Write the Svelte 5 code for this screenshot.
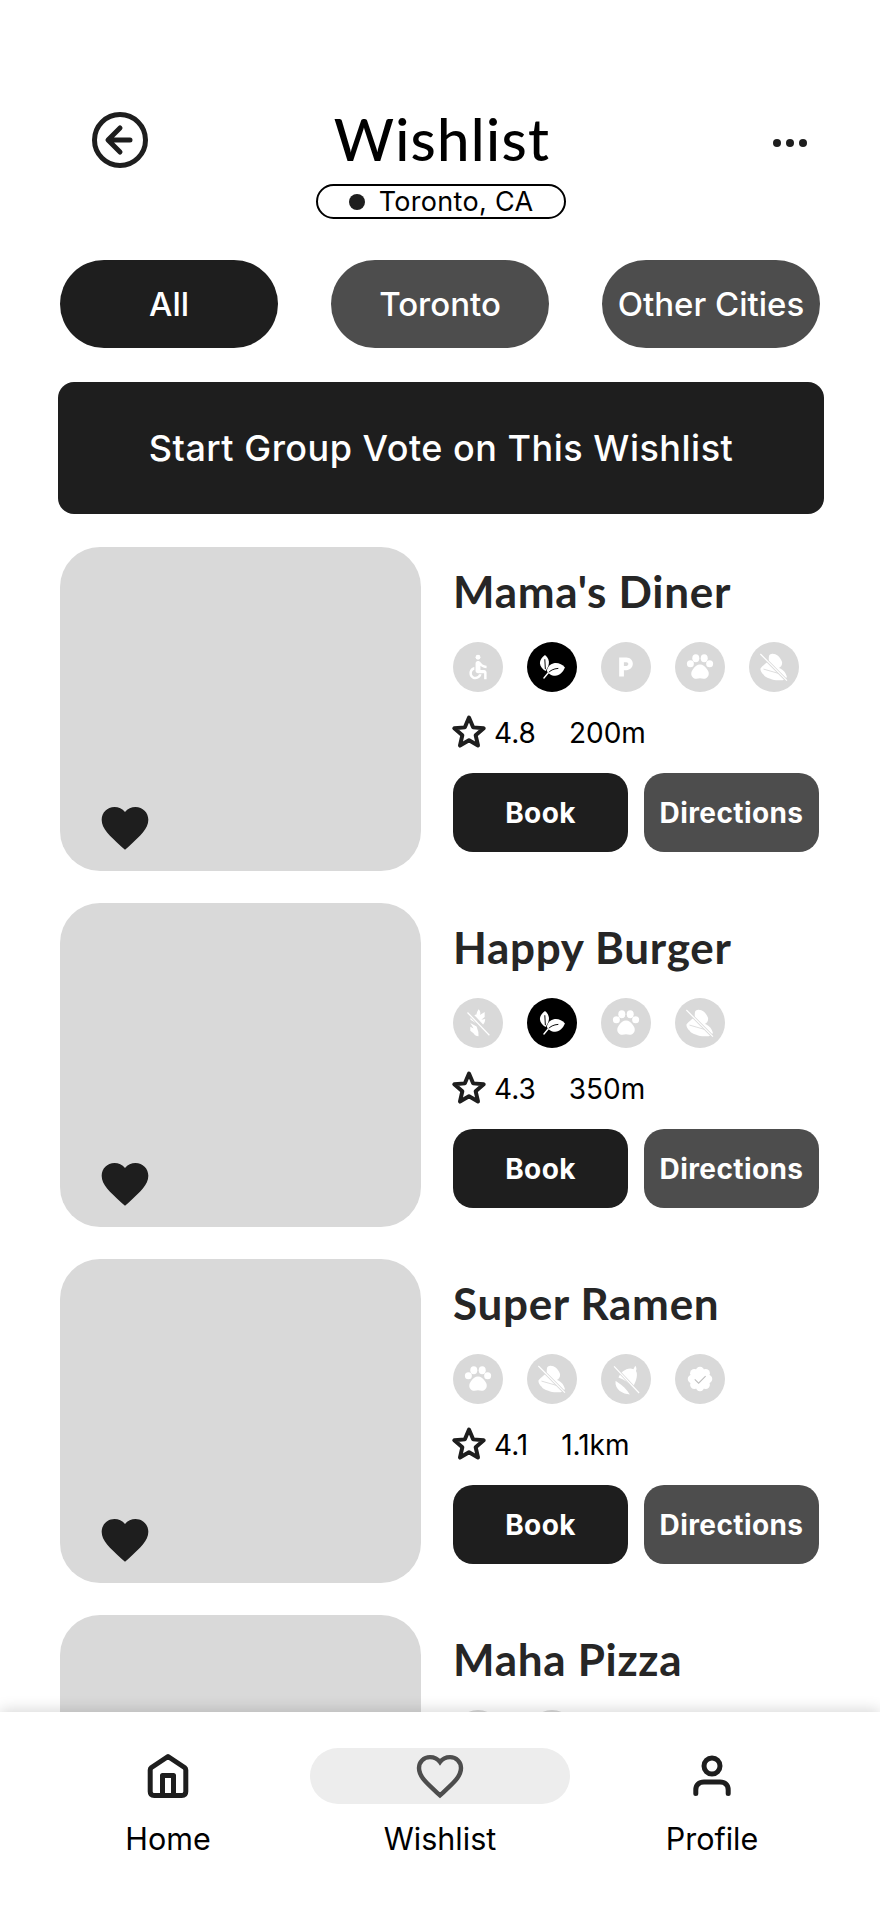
<script>
  const restaurants = [
    { name: "Mama's Diner", rating: '4.8', dist: '200m', badges: [['wheel', 0], ['leaf', 1], ['park', 0], ['paw', 0], ['nut', 0]] },
    { name: 'Happy Burger', rating: '4.3', dist: '350m', badges: [['wheat', 0], ['leaf', 1], ['paw', 0], ['nut', 0]] },
    { name: 'Super Ramen', rating: '4.1', dist: '1.1km', badges: [['paw', 0], ['nut', 0], ['acorn', 0], ['check', 0]] },
    { name: 'Maha Pizza', badges: [['paw', 0], ['nut', 0]] }
  ];
  const chips = [['All', true], ['Toronto', false], ['Other Cities', false]];
  const petals = [0, 45, 90, 135, 180, 225, 270, 315];
</script>

{#snippet badge(kind)}
  <svg viewBox="0 0 24 24" class="glyph" aria-hidden="true">
    {#if kind === 'wheel'}
      <g transform="translate(3.6 3.6) scale(.7)">
        <circle cx="12" cy="4" r="2" />
        <path d="M19 13v-2c-1.54.02-3.09-.75-4.07-1.83l-1.29-1.43c-.17-.19-.38-.34-.61-.45-.01 0-.01-.01-.02-.01H13c-.35-.2-.75-.3-1.19-.26C10.76 7.11 10 8.04 10 9.09V15c0 1.1.9 2 2 2h5v5h2v-5.5c0-1.1-.9-2-2-2h-3v-3.45c1.29 1.07 3.25 1.94 5 1.95zm-6.17 5c-.41 1.16-1.52 2-2.83 2-1.66 0-3-1.34-3-3 0-1.31.84-2.41 2-2.83V12.1c-2.28.46-4 2.48-4 4.9 0 2.76 2.24 5 5 5 2.42 0 4.44-1.72 4.9-4h-2.07z" />
      </g>
    {:else if kind === 'leaf'}
      <path d="M8 5.100C9.800 6.400 10.500 8.500 10.200 10.200 10 11.700 9.200 13.200 8.300 14.300 6.500 13.200 5.200 11.800 5.100 9.900 5 8 6.300 6.300 8 5.100z" />
      <path d="M19.400 12.300C17.800 10.400 15.300 9.400 13 9.900 10.800 10.400 9.500 12 9 14 9.700 15.900 11.600 17 13.800 17 16.400 17 18.300 14.800 19.400 12.300z" />
      <path d="M7.900 7.800 8.200 13" class="vein" />
      <path d="M9.800 15.400C11 14 12.800 13 15.400 12.800" class="vein" />
      <path d="M7.400 18.300 9.900 15.300" class="stem" />
    {:else if kind === 'park'}
      <g transform="translate(4.500 4.800) scale(.6)">
        <path d="M13 3H6v18h4.500v-6H13c3.310 0 6-2.690 6-6s-2.690-6-6-6zm0 8h-2.500V7.500H13c.9 0 1.700.7 1.700 1.750S13.900 11 13 11z" />
      </g>
    {:else if kind === 'paw'}
      <circle cx="6.500" cy="10.100" r="2" />
      <circle cx="17.500" cy="10.100" r="2" />
      <ellipse cx="9.600" cy="7" rx="2" ry="2.300" />
      <ellipse cx="14.400" cy="7" rx="2" ry="2.300" />
      <path d="M12 10.500c1.700 0 2.800 1 3.700 2.300.7 1 1.400 1.800 1.300 3 0 1.500-1.300 2.900-2.900 2.900-.8 0-1.400-.3-2.100-.3s-1.300.3-2.100.3c-1.600 0-2.900-1.400-2.900-2.900 0-1.200.6-2 1.300-3 .9-1.300 2-2.300 3.700-2.300z" />
    {:else if kind === 'nut'}
      <path d="M10.900 4.400C13 4.200 15.500 5.800 16.600 9.100 16.900 10.800 15.800 12 14.700 12.600 16.500 13 18.500 14.500 19.400 17.700 18.500 19.200 17 19.700 15.600 19.600 13 19.700 11.500 19.400 9.900 18.700 8 18 6.500 17.500 6.100 16.400 5 15.500 4.300 14.300 4.200 13 5 11.800 6 11 7 10.100 8 9.500 8.800 8.900 9 8.200 9 7 9 6 9.300 5.300 9.600 4.800 10.300 4.500 10.900 4.400z" />
      <path d="M6 13.200 16.500 16.200" class="cut-thin" />
      <path d="M4.200 4.600 19.400 19.800" class="cut" />
      <path d="M4.200 4.600 19.400 19.800" class="slash" />
    {:else if kind === 'wheat'}
      <path d="M12.300 4.200c1 .9 1.300 2 .8 3.200l2.700-1.700v2.800l-1.900 1.700 2.200-.5c0 1.200-.3 2.300-1.200 3.100l-5-5.300c.4-.2.800-.3 1.200-.3.100-1 .5-2 1.200-3zM7.700 7.900l2.300 1.400.7 2.700-3-1.800v-2.300zm-.1 4.100 3.600 2 1 3.200.1 2.400c-1.200-.1-2.300-.7-2.900-1.800l-1.800-1.400v-2.300l1.900 1.100-1.900-3.200z" />
      <path d="M6 6 18.500 19" class="cut" />
      <path d="M6 6 18.500 19" class="slash" />
    {:else if kind === 'acorn'}
      <path d="M6.800 13.500c3.100 1.900 5.800 4.500 7.400 7.300-3.900-.1-8.700-2.500-8.200-7.600.1 0 .5.100.8.300z" />
      <path d="M7.700 11.200c1.100-3.100 5.200-6.300 8.500-4.800l1.100-2c.8.900.8 2.100.4 3 1.100 1.700.6 5.100-1.800 9.300-2.200-2.300-4.900-4.400-8.200-5.500z" />
      <path d="M5.200 4.800 19.500 20" class="cut" />
      <path d="M5.200 4.800 19.500 20" class="slash" />
    {:else if kind === 'check'}
      {#each petals as a}
        <circle cx="12" cy="7.400" r="2.400" transform="rotate({a} 12 12)" />
      {/each}
      <circle cx="12" cy="12" r="5" />
      <path d="M9 12.200l2.200 2.200 4-4.100" class="tick" />
    {/if}
  </svg>
{/snippet}

<div class="screen">
  <header class="top">
    <div class="top-row">
      <button class="icon-btn back" aria-label="Back">
        <svg viewBox="0 0 56 56" width="56" height="56" aria-hidden="true">
          <circle cx="28" cy="28" r="25.500" class="outline" />
          <path d="M28 16 16 28l12 12M17 28h21" class="outline" />
        </svg>
      </button>
      <h1>Wishlist</h1>
      <button class="icon-btn more" aria-label="More">
        <i></i><i></i><i></i>
      </button>
    </div>
    <div class="loc"><span class="dot"></span>Toronto, CA</div>
  </header>

  <div class="chips">
    {#each chips as [label, active]}
      <button class="chip" class:active>{label}</button>
    {/each}
  </div>

  <button class="vote">Start Group Vote on This Wishlist</button>

  <main class="list">
    {#each restaurants as r}
      <article class="card">
        <div class="photo">
          <svg class="heart" viewBox="0 0 24 24" width="56" height="56" aria-hidden="true">
            <path d="M12 21.300 10.500 20C5.400 15.400 2 12.300 2 8.500 2 5.400 4.400 3 7.500 3c1.700 0 3.400.8 4.500 2.100C13.100 3.800 14.800 3 16.500 3 19.600 3 22 5.400 22 8.500c0 3.800-3.400 6.900-8.500 11.500L12 21.300z" />
          </svg>
        </div>
        <div class="info">
          <h2>{r.name}</h2>
          <div class="badges">
            {#each r.badges as [kind, on]}
              <span class="badge" class:on>{@render badge(kind)}</span>
            {/each}
          </div>
          {#if r.rating}
            <div class="meta">
              <svg viewBox="0 0 24 24" width="38" height="38" aria-hidden="true">
                <path d="M12 3.500 14.600 9.700 21.300 10.300 16.200 14.700 17.700 21.200 12 17.800 6.300 21.200 7.800 14.700 2.700 10.300 9.400 9.700z" class="star" />
              </svg>
              <span class="rating">{r.rating}</span>
              <span class="dist">{r.dist}</span>
            </div>
            <div class="actions">
              <button class="act book">Book</button>
              <button class="act dir">Directions</button>
            </div>
          {/if}
        </div>
      </article>
    {/each}
  </main>

  <nav class="nav">
    <div class="tab">
      <span class="tab-icon">
        <svg viewBox="0 0 48 48" width="48" height="48" aria-hidden="true">
          <path d="M24 4.500 40.500 15.500Q41.800 16.500 41.800 18V39.500Q41.800 43.500 37.800 43.500H10.200Q6.200 43.500 6.200 39.500V18Q6.200 16.500 7.500 15.500ZM18.500 43.500V23.500H29.500V43.500" class="nav-line" />
        </svg>
      </span>
      <span class="tab-label">Home</span>
    </div>
    <div class="tab">
      <span class="tab-icon current">
        <svg viewBox="0 0 24 24" width="56" height="56" aria-hidden="true">
          <path d="M12 20.300 10.800 19.200C6 14.900 3 12.100 3 8.600 3 5.900 5.100 3.900 7.700 3.900c1.700 0 3.300.8 4.300 2.100 1-1.300 2.600-2.100 4.300-2.100 2.600 0 4.700 2 4.700 4.700 0 3.500-3 6.300-7.800 10.600L12 20.300z" class="nav-heart" />
        </svg>
      </span>
      <span class="tab-label">Wishlist</span>
    </div>
    <div class="tab">
      <span class="tab-icon">
        <svg viewBox="0 0 48 48" width="48" height="48" aria-hidden="true">
          <circle cx="24" cy="14" r="8" class="nav-line" />
          <path d="M7.800 41.500V38C7.800 33 11 30 16 30H32C37 30 40.200 33 40.200 38V41.500" class="nav-line" />
        </svg>
      </span>
      <span class="tab-label">Profile</span>
    </div>
  </nav>
</div>

<style>
  :global(body) {
    margin: 0;
    background: #fff;
  }
  .screen {
    width: 880px;
    height: 1912px;
    display: flex;
    flex-direction: column;
    overflow: hidden;
    background: #fff;
    font-family: Inter, 'Liberation Sans', sans-serif;
    color: #000;
  }
  button {
    border: 0;
    padding: 0;
    font-family: inherit;
    cursor: pointer;
    background: none;
  }
  .top {
    padding-top: 106px;
    display: flex;
    flex-direction: column;
    align-items: center;
  }
  .top-row {
    width: 100%;
    height: 66px;
    position: relative;
    display: flex;
    justify-content: center;
    align-items: center;
  }
  h1 {
    margin: 0 0 0 4px;
    font: 500 58px/64px Lato, 'Noto Sans', sans-serif;
    letter-spacing: 1.300px;
    color: #000;
  }
  .icon-btn {
    position: absolute;
    display: flex;
    align-items: center;
    justify-content: center;
  }
  .back {
    left: 92px;
    top: 6px;
  }
  .more {
    left: 773px;
    top: 33px;
    gap: 5px;
  }
  .more i {
    width: 8px;
    height: 8px;
    border-radius: 50%;
    background: #1e1e1e;
  }
  .outline {
    fill: none;
    stroke: #1e1e1e;
    stroke-width: 5;
    stroke-linecap: round;
    stroke-linejoin: round;
  }
  .loc {
    margin: 12px 0 0 2px;
    width: 250px;
    height: 35px;
    box-sizing: border-box;
    border: 2px solid #000;
    border-radius: 18px;
    display: flex;
    align-items: center;
    justify-content: center;
    gap: 14px;
    font-size: 27px;
    letter-spacing: .3px;
  }
  .dot {
    width: 16px;
    height: 16px;
    border-radius: 50%;
    background: #1e1e1e;
  }
  .chips {
    margin: 41px 60px 0;
    display: flex;
    justify-content: space-between;
  }
  .chip {
    width: 218px;
    height: 88px;
    border-radius: 44px;
    background: #4d4d4d;
    color: #fff;
    font-size: 33px;
    font-weight: 500;
    white-space: nowrap;
  }
  .chip.active {
    background: #1e1e1e;
  }
  .vote {
    margin: 34px 56px 0 58px;
    height: 132px;
    border-radius: 16px;
    background: #1e1e1e;
    color: #fff;
    font-size: 36px;
    font-weight: 500;
    letter-spacing: .5px;
  }
  .list {
    flex: 1;
    min-height: 0;
    overflow: hidden;
    padding: 33px 60px 0;
    display: flex;
    flex-direction: column;
    gap: 32px;
  }
  .card {
    display: flex;
    gap: 32px;
    flex: none;
  }
  .photo {
    width: 361px;
    height: 324px;
    flex: none;
    border-radius: 40px;
    background: #d9d9d9;
    position: relative;
  }
  .heart {
    position: absolute;
    left: 37px;
    bottom: 15px;
    fill: #1e1e1e;
  }
  .info {
    flex: 1;
    display: flex;
    flex-direction: column;
  }
  h2 {
    margin: 17px 0 0;
    font: 700 44px/54px Lato, 'Noto Sans', sans-serif;
    letter-spacing: .7px;
    color: #262626;
  }
  .badges {
    margin-top: 24px;
    display: flex;
    gap: 24px;
  }
  .badge {
    width: 50px;
    height: 50px;
    border-radius: 50%;
    background: #d9d9d9;
    display: flex;
    align-items: center;
    justify-content: center;
  }
  .badge.on {
    background: #000;
  }
  .glyph {
    width: 42px;
    height: 42px;
    fill: #fff;
  }
  .slash {
    fill: none;
    stroke: #fff;
    stroke-width: .7;
  }
  .cut {
    fill: none;
    stroke: #d9d9d9;
    stroke-width: 1.600;
  }
  .cut-thin {
    fill: none;
    stroke: #d9d9d9;
    stroke-width: .5;
  }
  .vein {
    fill: none;
    stroke: #000;
    stroke-width: .55;
    stroke-linecap: round;
  }
  .stem {
    fill: none;
    stroke: #fff;
    stroke-width: .8;
    stroke-linecap: round;
  }
  .tick {
    fill: none;
    stroke: #bdbdbd;
    stroke-width: .6;
  }
  .meta {
    margin-top: 20px;
    height: 38px;
    display: flex;
    align-items: center;
    font-size: 28px;
  }
  .meta svg {
    margin-left: -3px;
    flex: none;
  }
  .star {
    fill: none;
    stroke: #1e1e1e;
    stroke-width: 2.500;
    stroke-linejoin: round;
  }
  .rating,
  .dist {
    padding-top: 3px;
  }
  .rating {
    margin-left: 6px;
  }
  .dist {
    margin-left: 33px;
  }
  .actions {
    margin-top: 23px;
    display: flex;
    gap: 16px;
  }
  .act {
    width: 175px;
    height: 79px;
    border-radius: 20px;
    color: #fff;
    font-size: 28px;
    font-weight: 700;
    letter-spacing: .4px;
  }
  .book {
    background: #1e1e1e;
  }
  .dir {
    background: #4d4d4d;
  }
  .nav {
    position: relative;
    height: 200px;
    flex: none;
    background: #fff;
    box-shadow: 0 -2px 14px rgba(0, 0, 0, .16);
    padding: 36px 32px 0;
    box-sizing: border-box;
    display: grid;
    grid-template-columns: repeat(3, 272px);
  }
  .tab {
    display: flex;
    flex-direction: column;
    align-items: center;
  }
  .tab-icon {
    width: 260px;
    height: 56px;
    border-radius: 28px;
    display: flex;
    align-items: center;
    justify-content: center;
  }
  .tab-icon.current {
    background: #ededed;
  }
  .tab-label {
    margin-top: 16px;
    font-size: 30.500px;
    line-height: 38px;
  }
  .nav-line {
    fill: none;
    stroke: #1e1e1e;
    stroke-width: 5;
    stroke-linecap: round;
    stroke-linejoin: round;
  }
  .nav-heart {
    fill: none;
    stroke: #4d4d4d;
    stroke-width: 1.900;
  }
</style>
